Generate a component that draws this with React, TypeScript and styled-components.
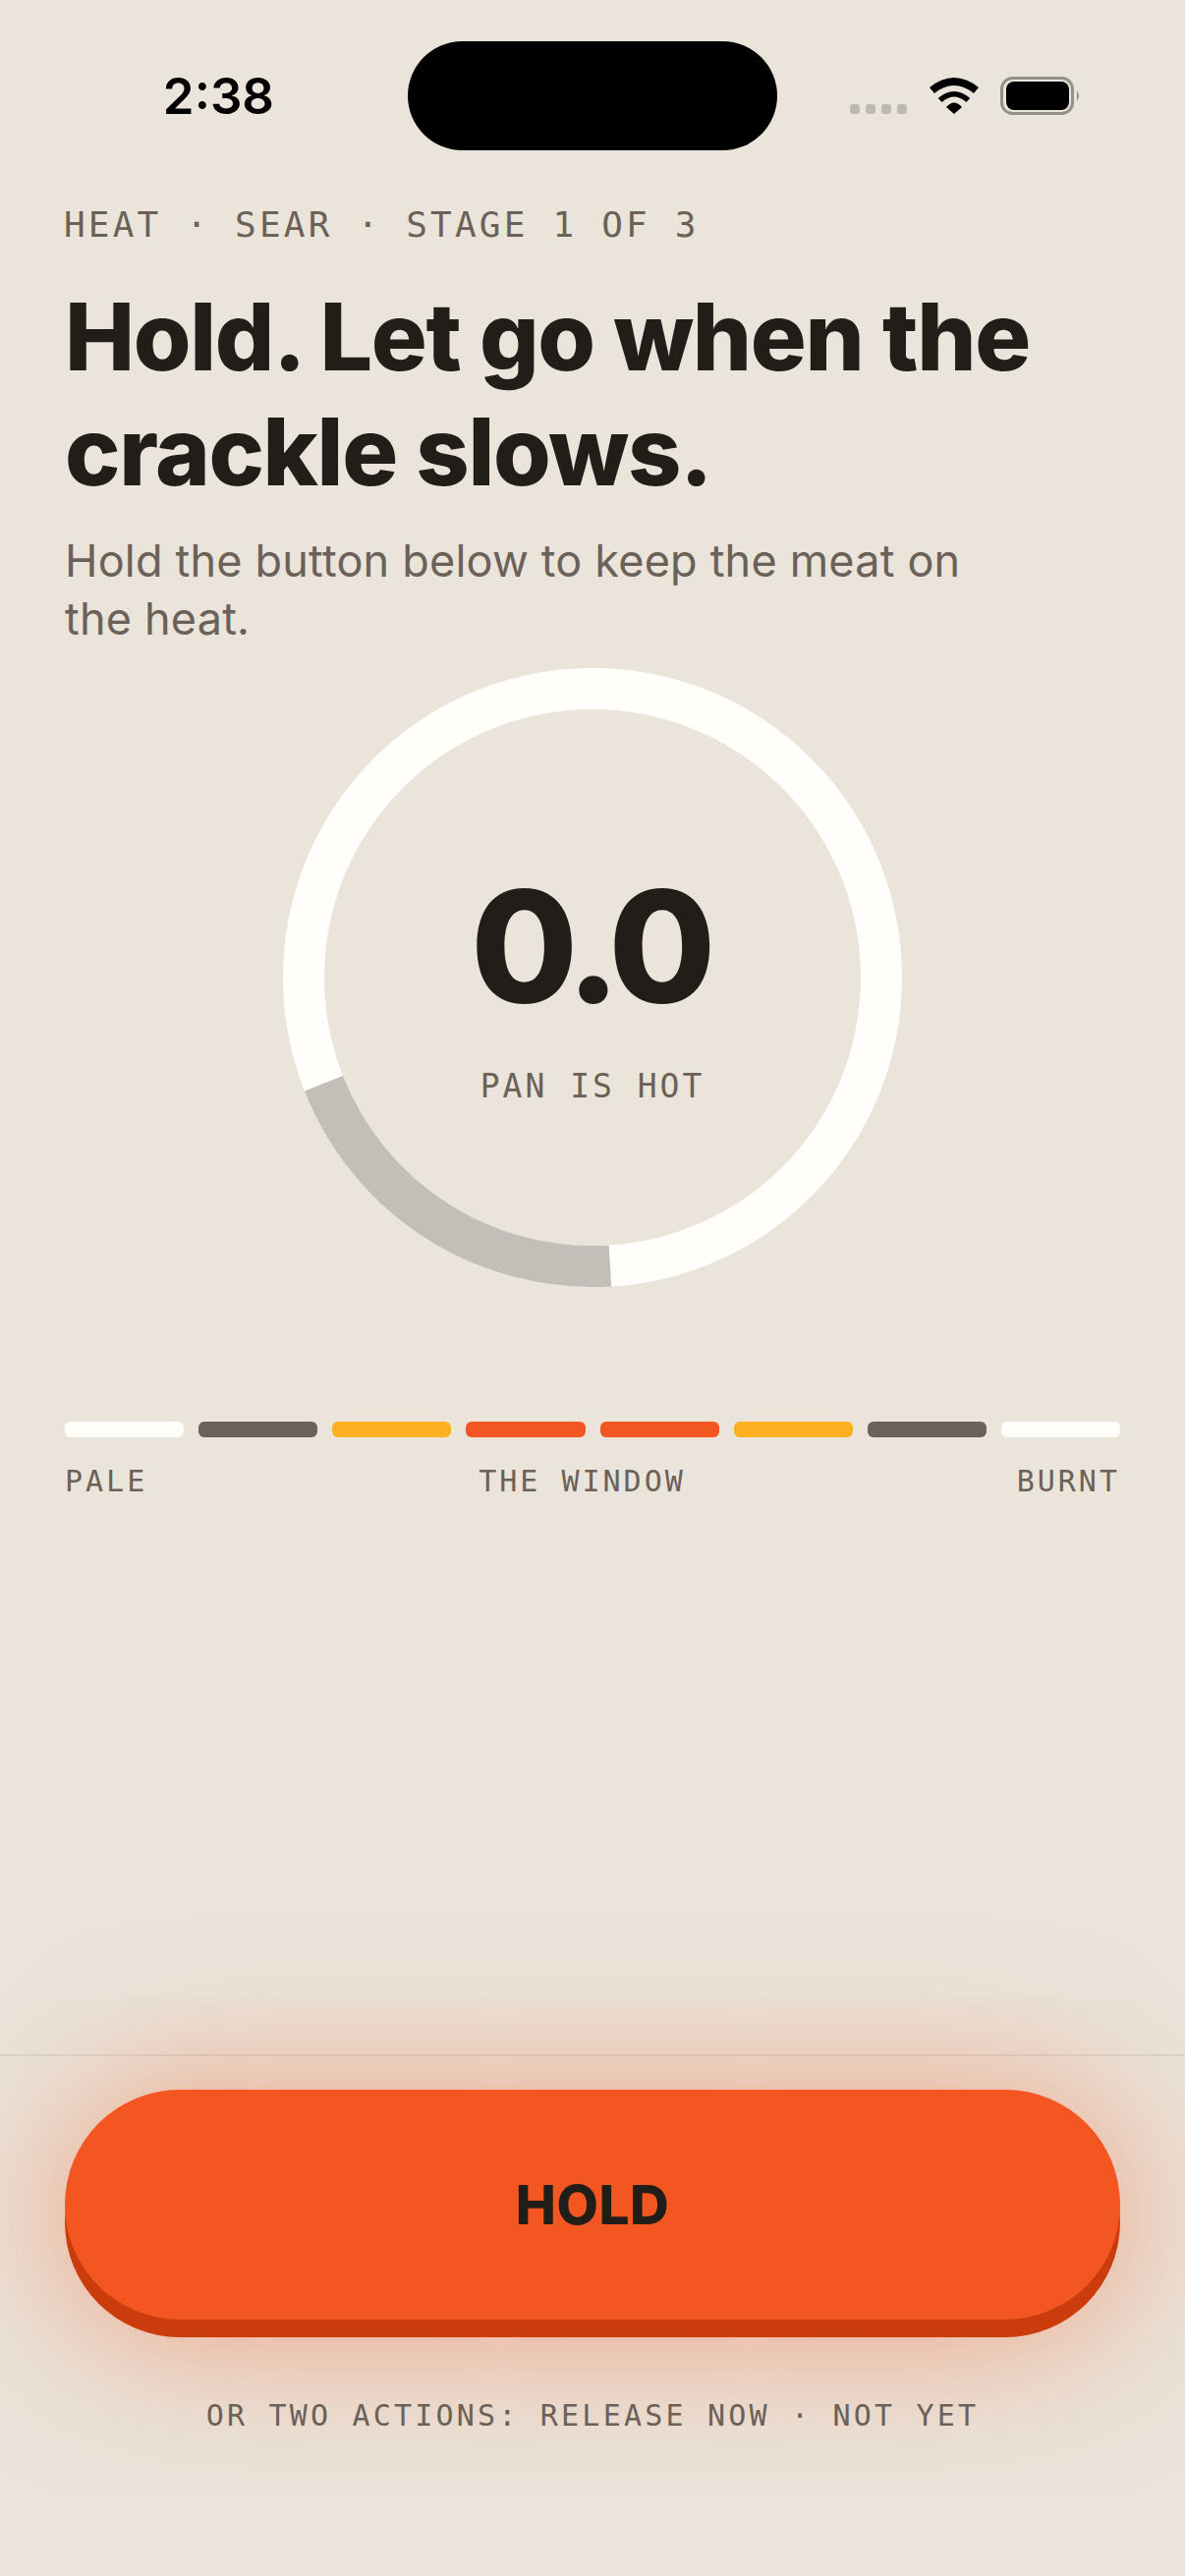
import React from "react";
import styled, { createGlobalStyle } from "styled-components";

const Global = createGlobalStyle`
  html, body { margin: 0; padding: 0; background: #eae4da; }
  * { box-sizing: border-box; }
`;
const MONO = `"DejaVu Sans Mono", "Liberation Mono", monospace`;
const Page = styled.div`
  width: 1206px; height: 2622px; display: flex; flex-direction: column; overflow: hidden;
  background: #eae4da; color: #211d19; font-family: Inter, sans-serif;
`;
const StatusBar = styled.div`
  height: 186px; flex: none; display: grid; grid-template-columns: 414px 378px 1fr; padding-top: 42px; align-items: start;
`;
const Time = styled.div`
  font: 600 51px/1 Inter, sans-serif; color: #000; text-align: right; padding: 30px 135px 0 0;
`;
const Island = styled.div`width: 376px; height: 111px; background: #000; border-radius: 56px; margin-left: 1px;`;
const Indicators = styled.div`display: flex; align-items: flex-start; padding: 37px 0 0 73px;`;
const Dots = styled.div`display: flex; gap: 6px; margin-top: 27px;`;
const Dot = styled.i`display: block; width: 10px; height: 10px; border-radius: 3px; background: #bdb9af;`;
const Wifi = styled.svg`display: block; margin-left: 23px;`;
const Battery = styled.svg`display: block; margin: -1px 0 0 22px;`;
const Main = styled.main`flex: 1; display: flex; flex-direction: column; padding: 21px 66px 0;`;
const Eyebrow = styled.div`font: 400 36px/44px ${MONO}; letter-spacing: 3.2px; color: #6b6158; margin-left: -1px;`;
const Title = styled.h1`margin: 33px 0 0; font: 800 95px/117px Inter, sans-serif; letter-spacing: -1.35px; color: #211d19;`;
const Sub = styled.p`margin: 23px 0 0; width: 960px; font: 400 45px/59px Inter, sans-serif; letter-spacing: 0.2px; color: #6b6158;`;
const Ring = styled.div`position: relative; flex: none; width: 630px; height: 630px; margin: 21px auto 0;`;
const RingSvg = styled.svg`display: block;`;
const RingCenter = styled.div`position: absolute; inset: 0; padding-top: 20px; display: flex; flex-direction: column; align-items: center; justify-content: center;`;
const Value = styled.div`font: 800 158px/158px Inter, sans-serif; letter-spacing: -7.5px; margin-right: 6px; color: #211d19;`;
const Label = styled.div`margin-top: 44px; font: 400 33px/40px ${MONO}; letter-spacing: 3px; color: #6b6158;`;
const Scale = styled.div`display: grid; grid-template-columns: repeat(8, 1fr); gap: 15px; margin-top: 137px;`;
const Seg = styled.div<{ $c: string }>`height: 16px; border-radius: 6px; background: ${p => p.$c};`;
const ScaleLabels = styled.div`display: flex; justify-content: space-between; margin-top: 27px; font: 400 30px/36px ${MONO}; letter-spacing: 3px; color: #6b6158;`;
const Footer = styled.footer`
  flex: none; height: 531px; border-top: 2px solid #d9d5cc; padding: 34px 66px 0; display: flex; flex-direction: column; align-items: stretch;
`;
const Hold = styled.button`
  height: 234px; border: 0; border-radius: 117px; background: #f45621; padding: 0;
  box-shadow: 0 18px 0 #cb3c0c, 0 10px 160px rgba(244, 86, 33, 0.55);
  font: 800 55px/1 Inter, sans-serif; letter-spacing: 0.5px; color: #211d19;
`;
const Hint = styled.div`margin-top: 80px; text-align: center; font: 400 30px/36px ${MONO}; letter-spacing: 3.2px; color: #6b6158;`;

const polar = (deg: number, r: number) => {
  const a = ((deg - 90) * Math.PI) / 180;
  return `${315 + r * Math.cos(a)} ${315 + r * Math.sin(a)}`;
};

export default function App() {
  const segs = ["#fffefa", "#6b6158", "#ffb020", "#f45621", "#f45621", "#ffb020", "#6b6158", "#fffefa"];
  return (
    <Page>
      <Global />
      <StatusBar>
        <Time>2:38</Time>
        <Island />
        <Indicators>
          <Dots><Dot /><Dot /><Dot /><Dot /></Dots>
          <Wifi width="50" height="37" viewBox="0 0 50 37">
            <path d="M0 10 Q25 -10 50 10 L45 16 Q25 0 5 16Z M8.7 21 Q25 7 41.3 21 L37.3 25 Q25 14 12.7 25Z M17 30 Q25 21 33 30 L25 37Z" fill="#000" />
          </Wifi>
          <Battery width="82" height="39" viewBox="0 0 82 39">
            <rect x="1.5" y="1.5" width="72" height="36" rx="11" fill="none" stroke="#94908a" strokeWidth="3" />
            <rect x="6" y="5" width="64" height="29" rx="8" fill="#000" />
            <path d="M78 14 Q82 19.500 78 25Z" fill="#94908a" />
          </Battery>
        </Indicators>
      </StatusBar>
      <Main>
        <Eyebrow>HEAT · SEAR · STAGE 1 OF 3</Eyebrow>
        <Title>Hold. Let go when the crackle slows.</Title>
        <Sub>Hold the button below to keep the meat on the heat.</Sub>
        <Ring>
          <RingSvg width="630" height="630" viewBox="0 0 630 630">
            <circle cx="315" cy="315" r="294" fill="none" stroke="#fffefa" strokeWidth="42" />
            <path d={`M ${polar(176.5, 294)} A 294 294 0 0 1 ${polar(248.5, 294)}`} fill="none" stroke="#c2bfb9" strokeWidth="42" />
          </RingSvg>
          <RingCenter>
            <Value>0.0</Value>
            <Label>PAN IS HOT</Label>
          </RingCenter>
        </Ring>
        <Scale>{segs.map((c, i) => <Seg key={i} $c={c} />)}</Scale>
        <ScaleLabels><span>PALE</span><span>THE WINDOW</span><span>BURNT</span></ScaleLabels>
      </Main>
      <Footer>
        <Hold>HOLD</Hold>
        <Hint>OR TWO ACTIONS: RELEASE NOW · NOT YET</Hint>
      </Footer>
    </Page>
  );
}
